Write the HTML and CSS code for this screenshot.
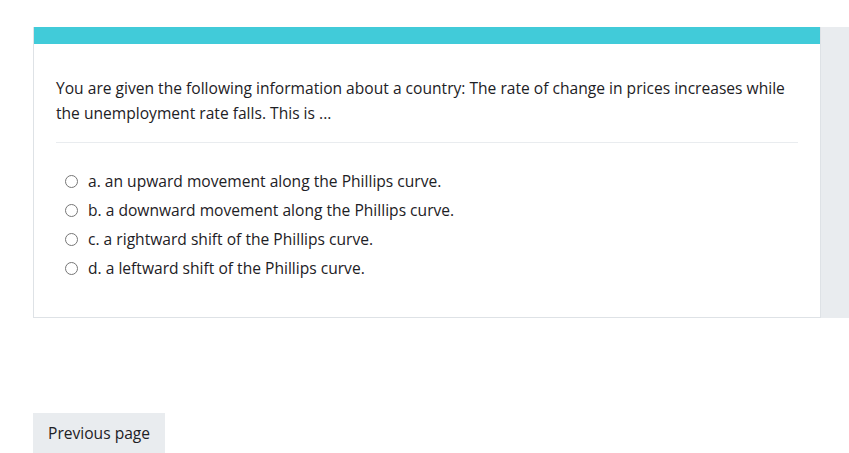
FILE: index.html
```html
<!DOCTYPE html>
<html>
<head>
<meta charset="utf-8">
<link rel="stylesheet" href="styles.css">
</head>
<body>
<div class="page">
  <div class="row">
    <div class="card">
      <div class="card-bar"></div>
      <div class="card-body">
        <div class="qtext">You are given the following information about a country: The rate of change in prices increases while the unemployment rate falls. This is ...</div>
        <div class="answers">
          <label class="answer"><input type="radio" name="q"><span>a. an upward movement along the Phillips curve.</span></label>
          <label class="answer"><input type="radio" name="q"><span>b. a downward movement along the Phillips curve.</span></label>
          <label class="answer"><input type="radio" name="q"><span>c. a rightward shift of the Phillips curve.</span></label>
          <label class="answer"><input type="radio" name="q"><span>d. a leftward shift of the Phillips curve.</span></label>
        </div>
      </div>
    </div>
    <div class="side"></div>
  </div>
  <div class="nav">
    <button class="btn">Previous page</button>
  </div>
</div>
</body>
</html>
```

FILE: styles.css
```css
html, body {
  margin: 0;
  padding: 0;
  background: #ffffff;
}
body {
  font-family: "Open Sans", "Noto Sans", sans-serif;
  font-size: 15.6px;
  line-height: 25px;
  color: #1d2125;
}
.page {
  padding: 27px 0 0 33px;
}
.row {
  display: flex;
  height: 291px;
}
.card {
  width: 788px;
  box-sizing: border-box;
  border: 1px solid #dee2e6;
  border-top: 0;
  background: #fff;
}
.card-bar {
  height: 17px;
  background: #41cbd9;
}
.card-body {
  padding: 32px 22px 0 22px;
}
.qtext {
  padding-bottom: 16px;
  border-bottom: 1px solid #e9ecef;
}
.answers {
  padding-top: 24px;
  display: flex;
  flex-direction: column;
}
.answer {
  display: flex;
  align-items: center;
  height: 29px;
  padding-left: 9px;
}
.answer input {
  margin: 0 10px 0 0;
  width: 13px;
  height: 13px;
}
.side {
  flex: 1;
  background: #e9ecef;
}
.nav {
  padding-top: 95px;
}
.btn {
  font: inherit;
  color: #1d2125;
  background: #e9ecef;
  border: 0;
  border-radius: 0;
  height: 40px;
  padding: 0 15px;
  white-space: nowrap;
  text-align: left;
}
```
